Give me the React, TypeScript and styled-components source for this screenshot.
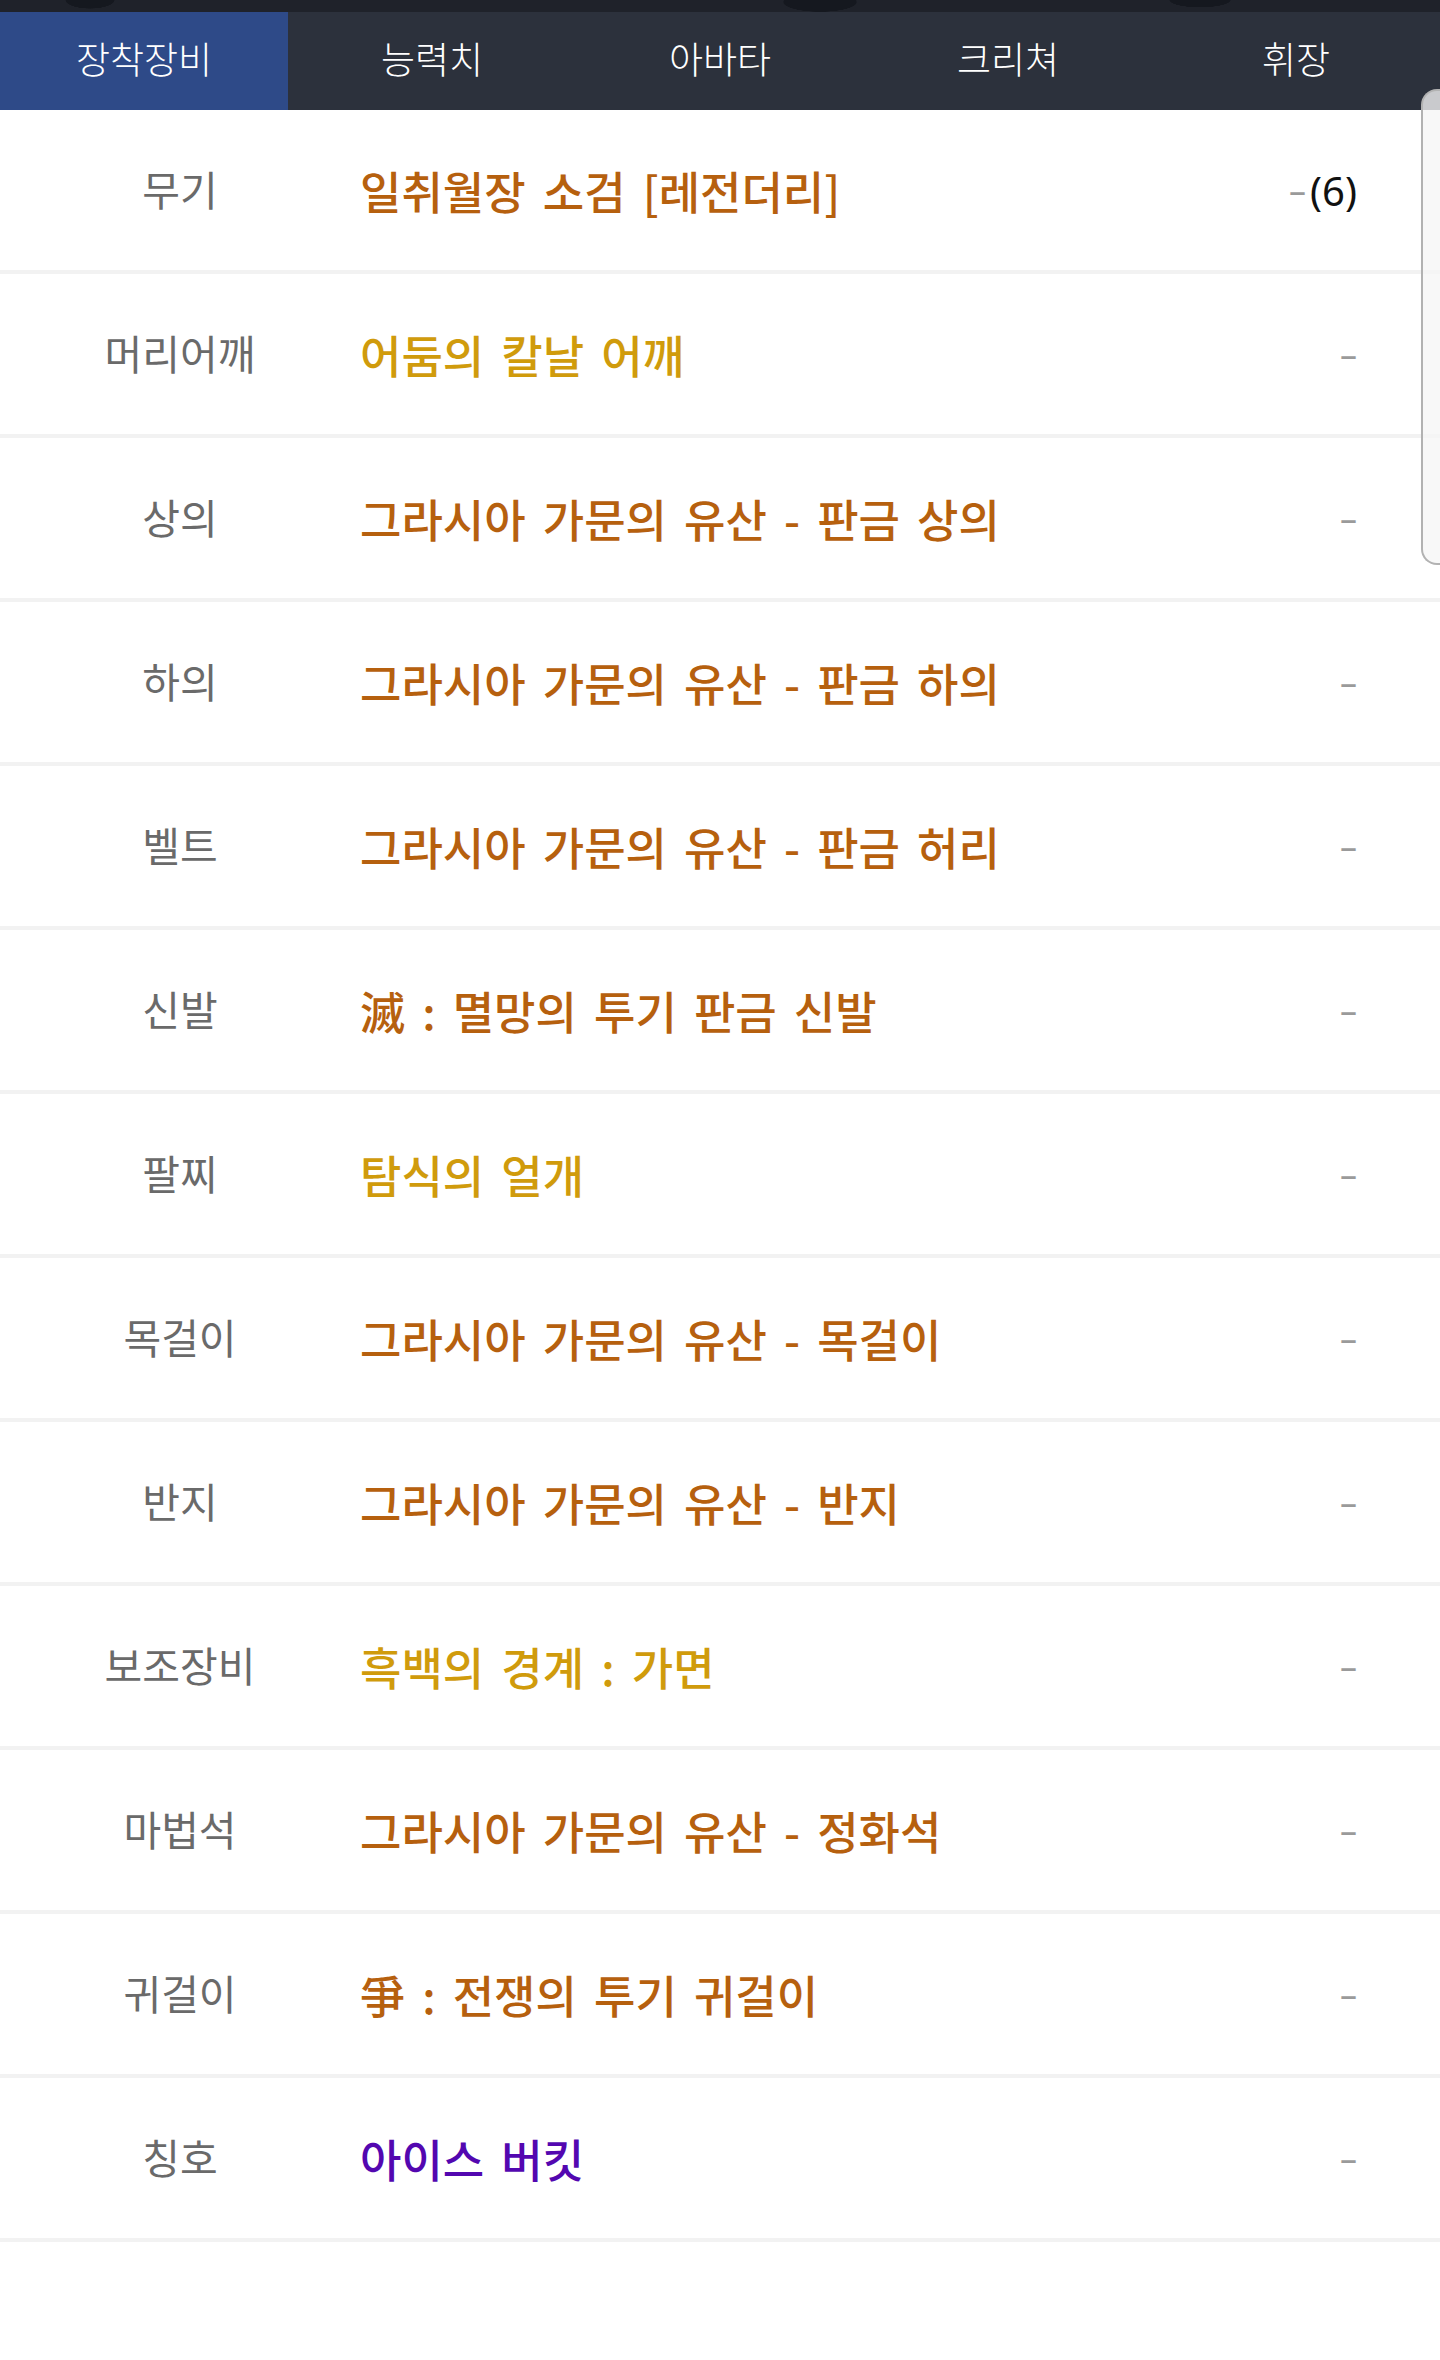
import React from 'react'
import styled, { createGlobalStyle } from 'styled-components'

type Grade = 'legendary' | 'unique' | 'epic'

interface EquipItem {
  slot: string
  name: string
  grade: Grade
  count?: number
}

const gradeColors: Record<Grade, string> = {
  legendary: '#b6600e',
  unique: '#d09b0c',
  epic: '#5307b0',
}

const tabs = ['장착장비', '능력치', '아바타', '크리쳐', '휘장']

const items: EquipItem[] = [
  { slot: '무기', name: '일취월장 소검 [레전더리]', grade: 'legendary', count: 6 },
  { slot: '머리어깨', name: '어둠의 칼날 어깨', grade: 'unique' },
  { slot: '상의', name: '그라시아 가문의 유산 - 판금 상의', grade: 'legendary' },
  { slot: '하의', name: '그라시아 가문의 유산 - 판금 하의', grade: 'legendary' },
  { slot: '벨트', name: '그라시아 가문의 유산 - 판금 허리', grade: 'legendary' },
  { slot: '신발', name: '滅 : 멸망의 투기 판금 신발', grade: 'legendary' },
  { slot: '팔찌', name: '탐식의 얼개', grade: 'unique' },
  { slot: '목걸이', name: '그라시아 가문의 유산 - 목걸이', grade: 'legendary' },
  { slot: '반지', name: '그라시아 가문의 유산 - 반지', grade: 'legendary' },
  { slot: '보조장비', name: '흑백의 경계 : 가면', grade: 'unique' },
  { slot: '마법석', name: '그라시아 가문의 유산 - 정화석', grade: 'legendary' },
  { slot: '귀걸이', name: '爭 : 전쟁의 투기 귀걸이', grade: 'legendary' },
  { slot: '칭호', name: '아이스 버킷', grade: 'epic' },
]

const GlobalStyle = createGlobalStyle`
  body {
    margin: 0;
    background: #ffffff;
    font-family: 'Noto Sans CJK KR', 'Noto Sans', sans-serif;
    overflow-x: hidden;
  }
`

const Page = styled.div`
  position: relative;
  width: 1440px;
  min-height: 2360px;
  background: #ffffff;
`

const TopBand = styled.div`
  height: 12px;
  background:
    radial-gradient(ellipse 40px 14px at 90px 0, #15181f 60%, transparent 62%),
    radial-gradient(ellipse 60px 16px at 820px 2px, #15181f 60%, transparent 62%),
    radial-gradient(ellipse 50px 12px at 1200px 0, #15181f 60%, transparent 62%),
    #1f222a;
`

const TabBar = styled.nav`
  display: grid;
  grid-template-columns: repeat(5, 1fr);
  height: 98px;
  background: #2c313c;
`

const Tab = styled.div<{ $active?: boolean }>`
  display: flex;
  align-items: center;
  justify-content: center;
  background: ${({ $active }) => ($active ? '#2e4a88' : 'transparent')};
  color: #ffffff;
  font-size: 37px;
  font-weight: 300;
  padding-bottom: 6px;
`

const List = styled.ul`
  list-style: none;
  margin: 0;
  padding: 0;
`

const Row = styled.li`
  display: grid;
  grid-template-columns: 360px 1fr auto;
  align-items: center;
  height: 160px;
  padding-right: 83px;
  border-bottom: 4px solid #f2f2f2;
`

const SlotLabel = styled.span`
  text-align: center;
  color: #6a6a6a;
  font-size: 41px;
  font-weight: 400;
  padding-bottom: 4px;
`

const ItemName = styled.span<{ $grade: Grade }>`
  color: ${({ $grade }) => gradeColors[$grade]};
  font-size: 45px;
  font-weight: 500;
  word-spacing: 7px;
  white-space: nowrap;
`

const Extra = styled.span`
  display: flex;
  align-items: center;
  gap: 4px;
  font-family: 'Noto Sans', sans-serif;
  font-size: 40px;
  color: #111111;
`

const Dash = styled.span`
  color: #9a9a9a;
  font-size: 34px;
`

const SideHandle = styled.div`
  position: absolute;
  top: 89px;
  right: -20px;
  width: 37px;
  height: 472px;
  border: 2px solid #b2b2b2;
  border-right: none;
  border-radius: 16px 0 0 16px;
  background: rgba(246, 246, 246, 0.78);
`

export default function App() {
  return (
    <Page>
      <GlobalStyle />
      <TopBand />
      <TabBar>
        {tabs.map((t, i) => (
          <Tab key={t} $active={i === 0}>
            {t}
          </Tab>
        ))}
      </TabBar>
      <List>
        {items.map((item) => (
          <Row key={item.slot}>
            <SlotLabel>{item.slot}</SlotLabel>
            <ItemName $grade={item.grade}>{item.name}</ItemName>
            <Extra>
              <Dash>–</Dash>
              {item.count !== undefined && <span>({item.count})</span>}
            </Extra>
          </Row>
        ))}
      </List>
      <SideHandle />
    </Page>
  )
}
